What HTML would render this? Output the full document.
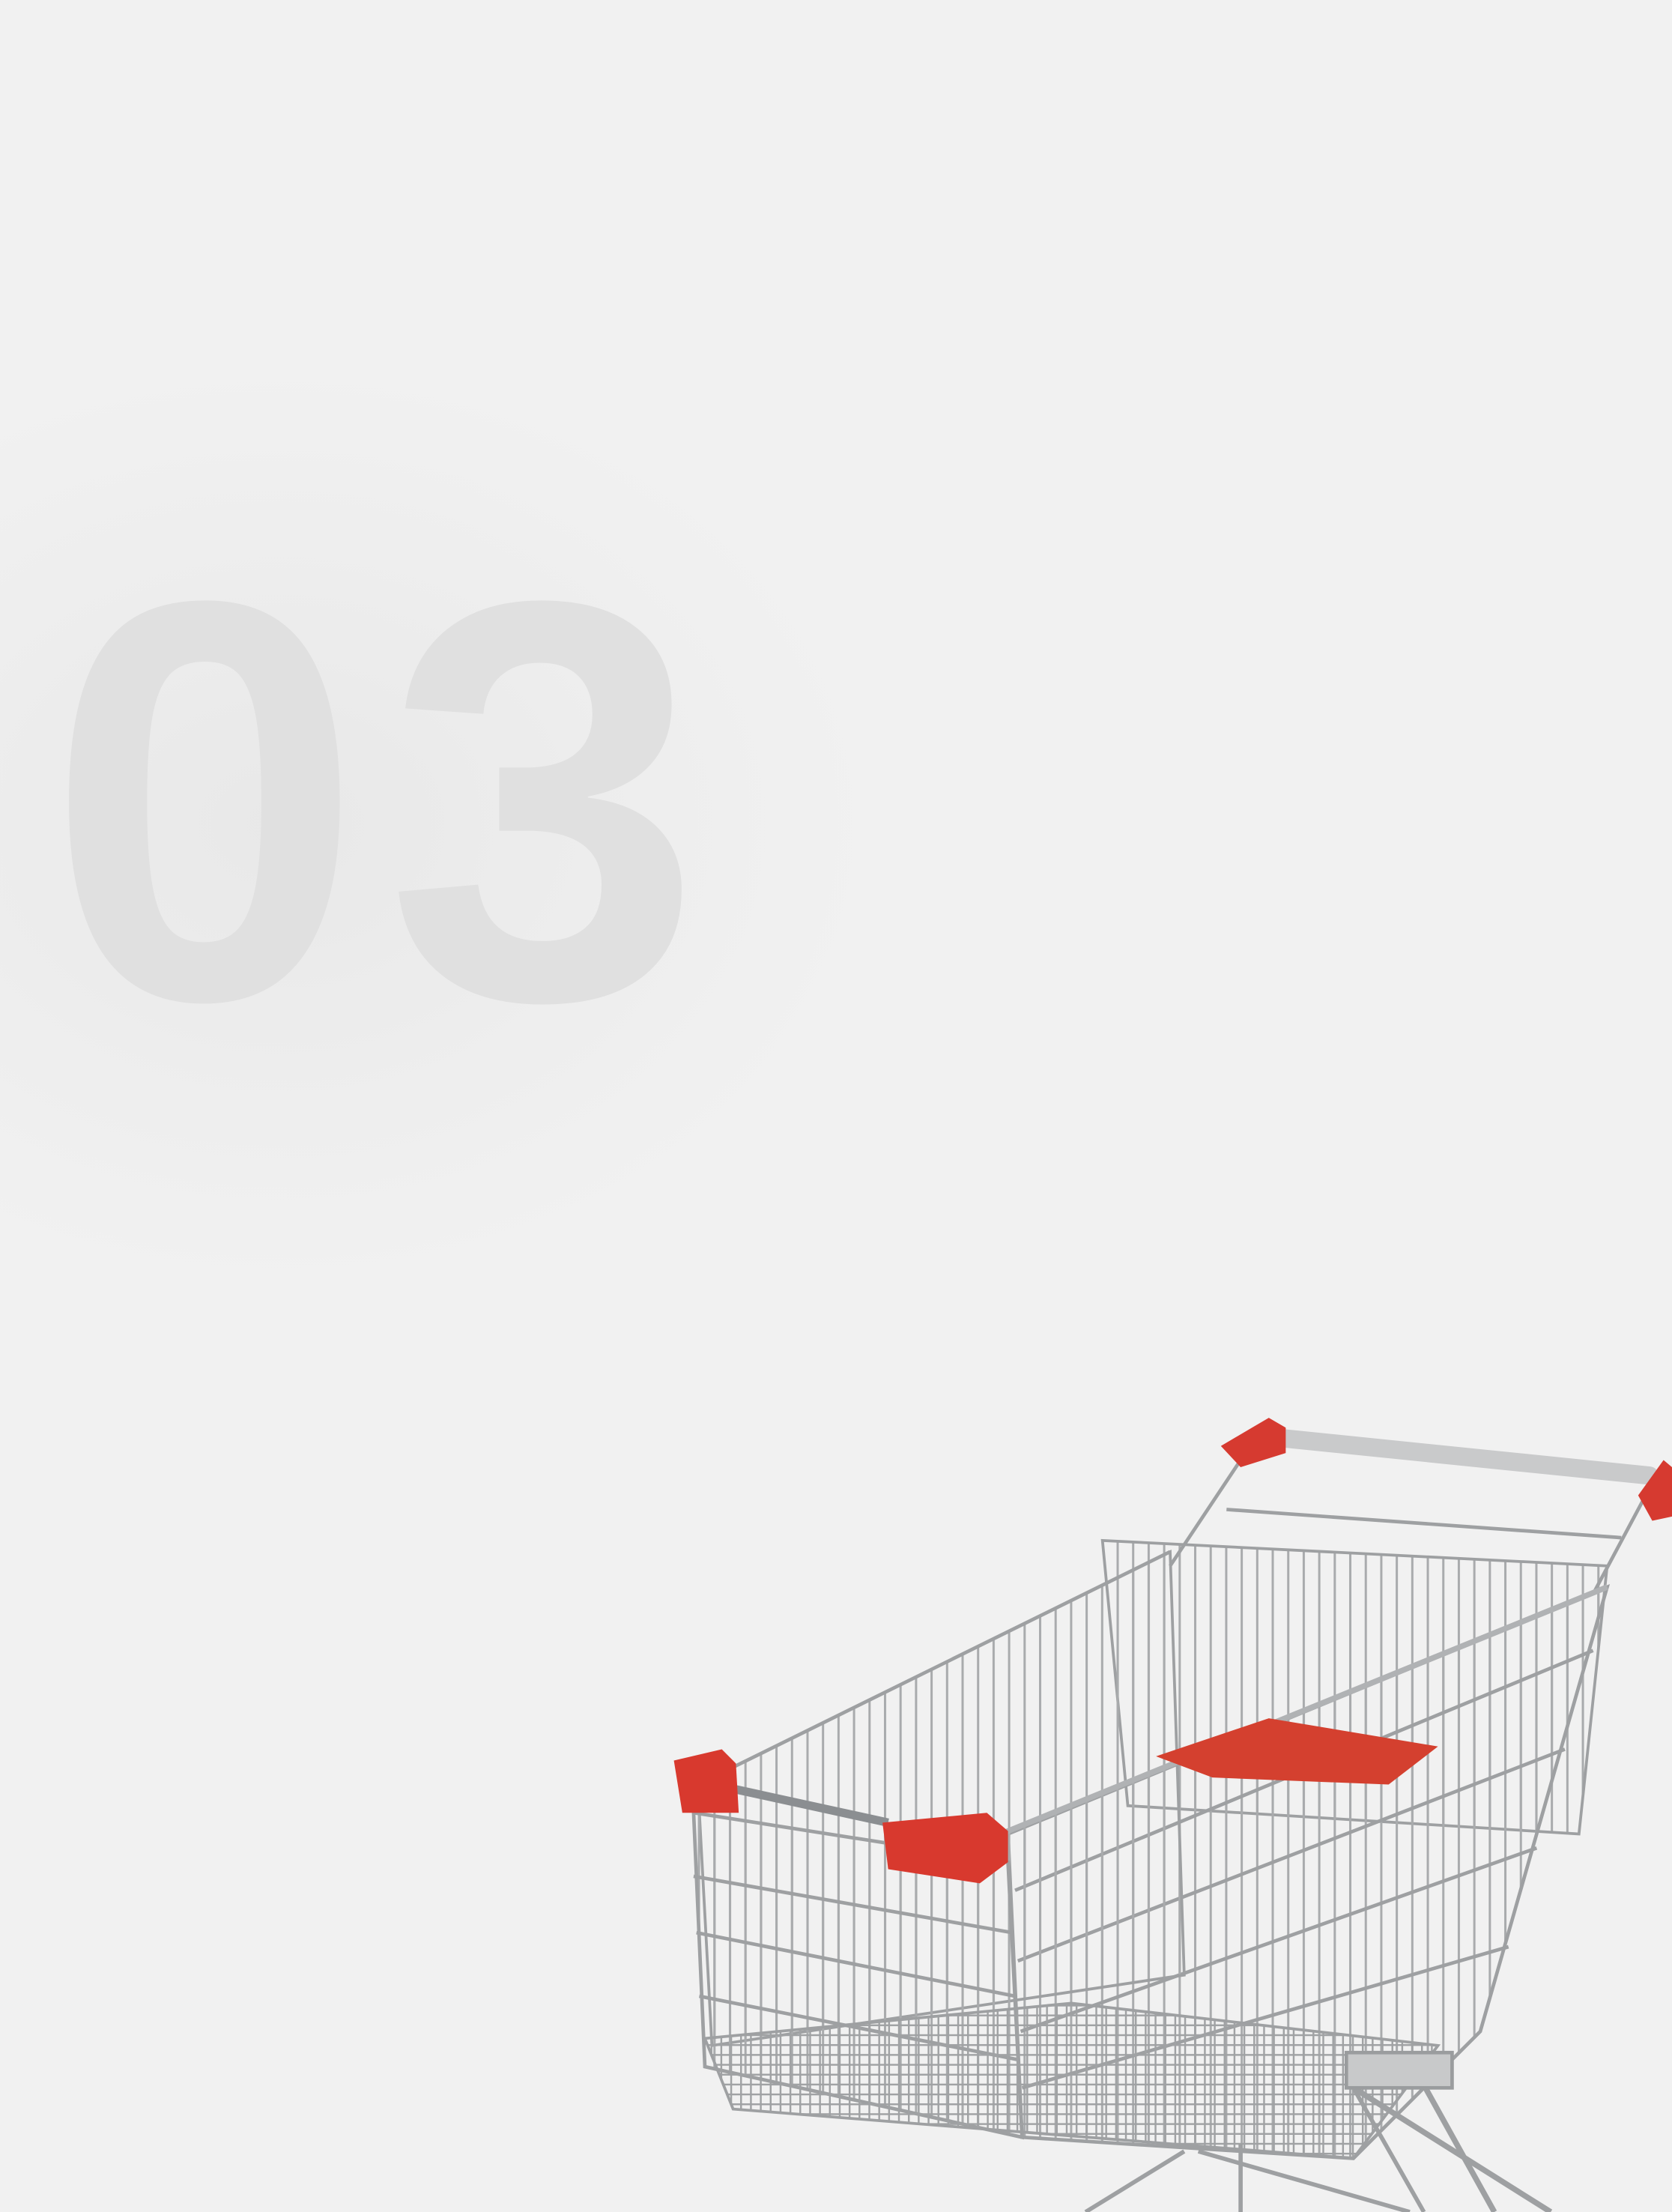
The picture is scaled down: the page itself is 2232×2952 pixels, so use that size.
<!DOCTYPE html>
<html><head><meta charset="utf-8">
<style>
html,body{margin:0;padding:0}
body{width:2232px;height:2952px;background:#f1f1f1;position:relative;overflow:hidden;font-family:"Liberation Sans",sans-serif}
.glow{position:absolute;left:-400px;top:500px;width:1550px;height:1200px;border-radius:50%;background:radial-gradient(ellipse at center,rgba(225,225,225,0.55) 0%,rgba(232,232,232,0.35) 45%,rgba(241,241,241,0) 72%)}
.num{position:absolute;left:62px;top:690px;font-size:760px;font-weight:bold;color:#e0e0e0;letter-spacing:30px;line-height:1}
svg{position:absolute;left:0;top:0}
</style></head><body>
<div class="glow"></div>
<div class="num">03</div>
<svg width="2232" height="2952" viewBox="0 0 1186 1568" preserveAspectRatio="none">
<defs>
<pattern id="v" width="11" height="20" patternUnits="userSpaceOnUse"><rect x="0" y="0" width="1.6" height="20" fill="#a9abad"/></pattern>
<pattern id="m" width="7" height="7" patternUnits="userSpaceOnUse"><rect width="1.3" height="7" fill="#a0a2a4"/><rect width="7" height="1.3" fill="#a0a2a4"/></pattern>
</defs>
<g stroke="#9ea0a2" fill="none" stroke-width="2.5">
<polygon points="782,1092 1140,1110 1120,1300 800,1280" fill="url(#v)" stroke-width="2"/>
<line x1="870" y1="1070" x2="1150" y2="1090"/>
<line x1="880" y1="1035" x2="830" y2="1110"/>
<line x1="1170" y1="1055" x2="1130" y2="1130"/>
<polygon points="715,1300 1140,1125 1050,1440 960,1530 725,1515" fill="url(#v)"/>
<line x1="720" y1="1340" x2="1130" y2="1170"/>
<line x1="722" y1="1390" x2="1110" y2="1240"/>
<line x1="724" y1="1440" x2="1090" y2="1310"/>
<line x1="725" y1="1480" x2="1070" y2="1380"/>
<polygon points="495,1265 830,1100 840,1400 505,1450" fill="url(#v)" stroke-width="2"/>
<line x1="495" y1="1265" x2="830" y2="1100"/>
<polygon points="492,1285 715,1320 725,1515 500,1465" fill="url(#v)"/>
<line x1="492" y1="1330" x2="718" y2="1370"/>
<line x1="494" y1="1370" x2="720" y2="1415"/>
<line x1="496" y1="1415" x2="722" y2="1460"/>
<polygon points="500,1445 760,1420 1020,1450 960,1530 520,1495" fill="url(#m)" stroke-width="2"/>
<line x1="520" y1="1268" x2="630" y2="1292" stroke="#8b8e91" stroke-width="6"/>
<line x1="710" y1="1300" x2="1140" y2="1125" stroke="#b0b2b4" stroke-width="4"/>
<line x1="960" y1="1480" x2="1100" y2="1568" stroke-width="4"/>
<line x1="1000" y1="1460" x2="1060" y2="1568" stroke-width="4"/>
<line x1="960" y1="1480" x2="1010" y2="1568" stroke-width="3"/>
<line x1="840" y1="1525" x2="770" y2="1568" stroke-width="3"/>
<line x1="850" y1="1525" x2="1000" y2="1568" stroke-width="3"/>
<line x1="880" y1="1520" x2="880" y2="1568" stroke-width="3"/>
<rect x="955" y="1455" width="75" height="25" fill="#c8c9ca" stroke="#9a9c9e"/>
</g>
<line x1="895" y1="1018" x2="1170" y2="1046" stroke="#c9cacb" stroke-width="13" stroke-linecap="round"/>
<polygon points="866,1025 900,1005 912,1012 912,1030 880,1040" fill="#d63a30"/>
<polygon points="1162,1060 1180,1035 1186,1040 1186,1075 1172,1078" fill="#d63a30"/>
<polygon points="478,1248 512,1240 522,1250 524,1285 484,1285" fill="#d8392e"/>
<polygon points="626,1292 700,1285 715,1298 715,1320 695,1335 630,1325" fill="#d8392e"/>
<polygon points="820,1245 900,1218 1020,1238 985,1265 860,1260" fill="#d4402f"/>
</svg>
</body></html>
